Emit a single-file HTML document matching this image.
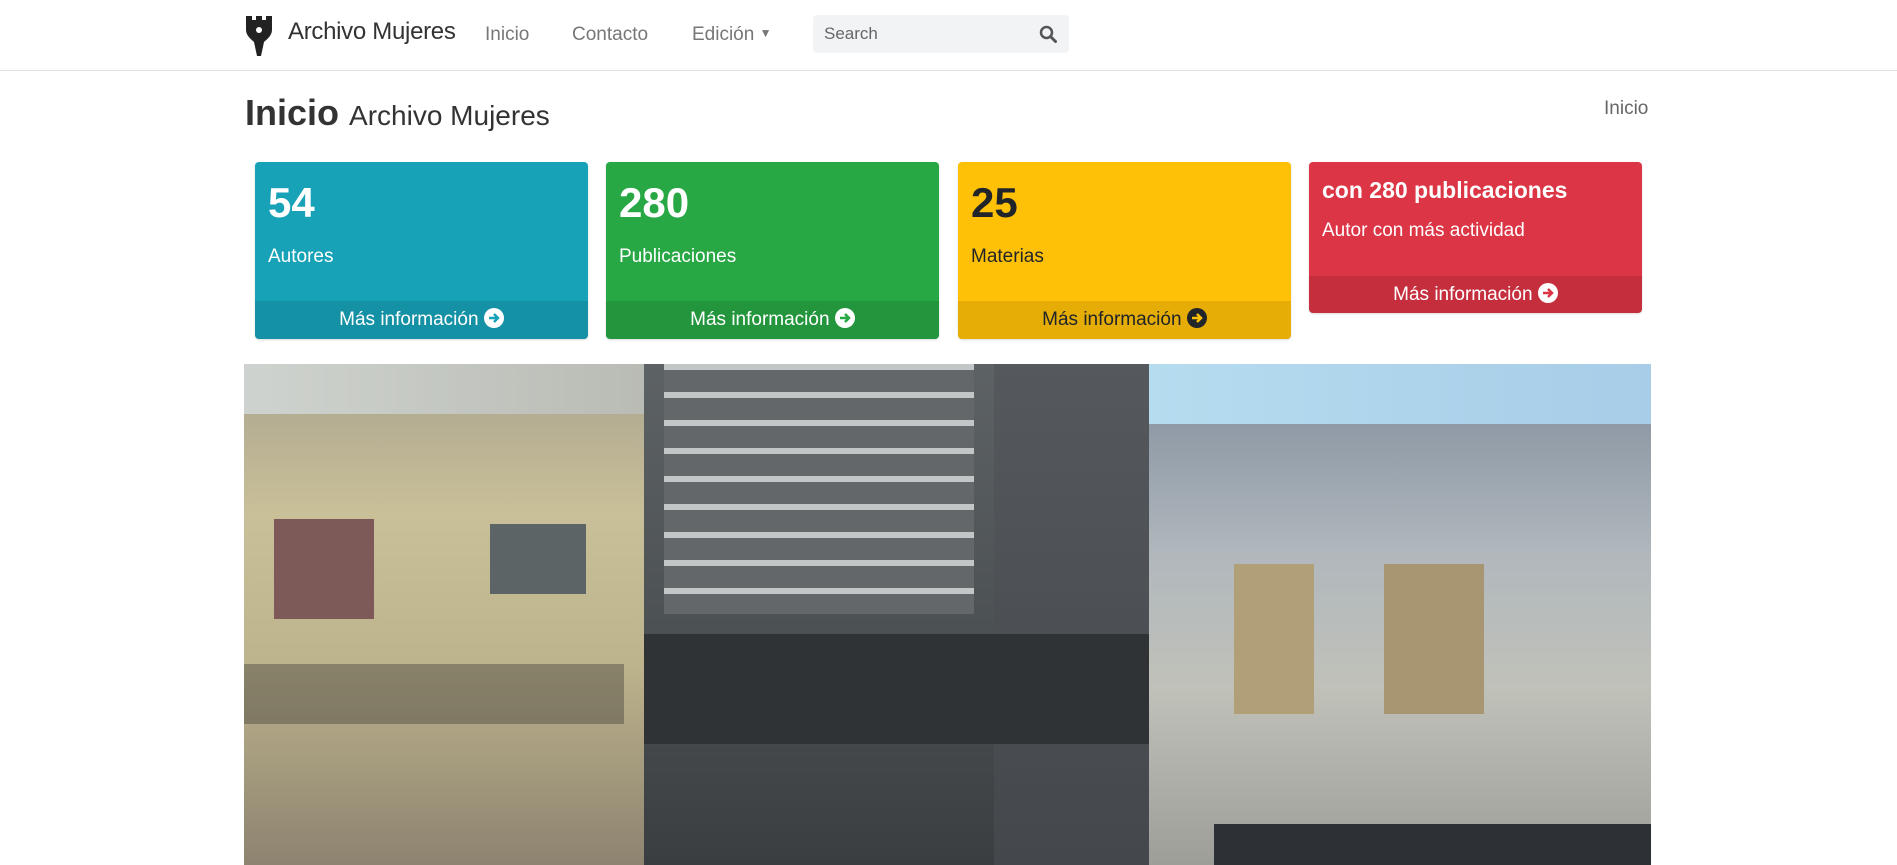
<!DOCTYPE html>
<html><head><meta charset="utf-8"><style>
*{box-sizing:border-box;margin:0;padding:0}
body{width:1897px;height:865px;overflow:hidden;background:#fff;font-family:"Liberation Sans",sans-serif;color:#212529;position:relative}
.nav{position:absolute;left:0;top:0;width:1897px;height:71px;border-bottom:1px solid #dee2e6}
.abs{position:absolute}
.brand{left:288px;top:18px;font-size:24px;color:#333;letter-spacing:-0.3px}
.nl{top:24px;font-size:19px;color:#777}
.search{left:813px;top:15px;width:256px;height:38px;background:#f1f3f5;border-radius:4px}
.card{position:absolute;top:162px;width:333px;height:177px;border-radius:4px;color:#fff;overflow:hidden;box-shadow:0 1px 2px rgba(0,0,0,.15)}
.card .n{position:absolute;left:13px;top:17px;font-size:42px;font-weight:bold}
.card .l{position:absolute;left:13px;top:84px;font-size:19px}
.card .f{position:absolute;left:0;bottom:0;width:100%;height:38px;text-align:center;font-size:19px;line-height:38px;background:rgba(0,0,0,.1)}
.ic{display:inline-block;width:20px;height:20px;border-radius:50%;background:currentColor;vertical-align:-3px;position:relative}
.ic svg{position:absolute;left:3px;top:3px}
</style></head><body>
<div class="nav">
<svg class="abs" style="left:244px;top:12px" width="30" height="44" viewBox="0 0 30 44"><path d="M2 4h6v4h4V4h6v4h4V4h6v14c0 6-6 10-8 12l-3 14h-4l-3-14C8 28 2 24 2 18z" fill="#222"/><circle cx="15" cy="18" r="3" fill="#fff"/></svg>
<div class="abs brand">Archivo Mujeres</div>
<div class="abs nl" style="left:485px">Inicio</div>
<div class="abs nl" style="left:572px">Contacto</div>
<div class="abs nl" style="left:692px">Edición <span style="font-size:12px;vertical-align:3px">▼</span></div>
<div class="abs search"><span class="abs" style="left:11px;top:9px;font-size:17px;color:#666">Search</span>
<svg class="abs" style="left:226px;top:10px" width="18" height="18" viewBox="0 0 18 18"><circle cx="7.5" cy="7.5" r="5.5" stroke="#555" stroke-width="2.5" fill="none"/><path d="M11.5 11.5l5 5" stroke="#555" stroke-width="3" stroke-linecap="round"/></svg></div>
</div>
<div class="abs" style="left:245px;top:92px;font-size:36px;color:#333"><b>Inicio</b> <span style="font-size:28px">Archivo Mujeres</span></div>
<div class="abs" style="left:1604px;top:98px;font-size:19px;color:#666">Inicio</div>

<div class="card" style="left:255px;background:#17a2b8"><div class="n">54</div><div class="l">Autores</div><div class="f">Más información <span class="ic" style="color:#fff"><svg width="14" height="14" viewBox="0 0 14 14"><path d="M2 7h9M7 3l4 4-4 4" stroke="#17a2b8" stroke-width="2.5" fill="none"/></svg></span></div></div>
<div class="card" style="left:606px;background:#28a745"><div class="n">280</div><div class="l">Publicaciones</div><div class="f">Más información <span class="ic" style="color:#fff"><svg width="14" height="14" viewBox="0 0 14 14"><path d="M2 7h9M7 3l4 4-4 4" stroke="#28a745" stroke-width="2.5" fill="none"/></svg></span></div></div>
<div class="card" style="left:958px;background:#ffc107;color:#212529"><div class="n">25</div><div class="l">Materias</div><div class="f">Más información <span class="ic" style="color:#212529"><svg width="14" height="14" viewBox="0 0 14 14"><path d="M2 7h9M7 3l4 4-4 4" stroke="#ffc107" stroke-width="2.5" fill="none"/></svg></span></div></div>
<div class="card" style="left:1309px;height:151px;background:#dc3545"><div class="n" style="font-size:23px;top:15px">con 280 publicaciones</div><div class="l" style="top:58px">Autor con más actividad</div><div class="f" style="height:37px;line-height:37px">Más información <span class="ic" style="color:#fff"><svg width="14" height="14" viewBox="0 0 14 14"><path d="M2 7h9M7 3l4 4-4 4" stroke="#dc3545" stroke-width="2.5" fill="none"/></svg></span></div></div>

<div class="abs" style="left:244px;top:364px;width:1407px;height:501px;overflow:hidden;background:#8a8f94">
<div class="abs" style="left:0;top:0;width:400px;height:501px;background:linear-gradient(#a9a48f,#c9bf98 30%,#bdb38c 60%,#8d8370)"></div>
<div class="abs" style="left:0;top:0;width:400px;height:50px;background:linear-gradient(90deg,#cfd3cf,#b9bcb4)"></div>
<div class="abs" style="left:30px;top:155px;width:100px;height:100px;background:#7d5a58"></div>
<div class="abs" style="left:246px;top:160px;width:96px;height:70px;background:#5c6466"></div>
<div class="abs" style="left:0;top:300px;width:380px;height:60px;background:rgba(40,40,40,.35)"></div>
<div class="abs" style="left:400px;top:0;width:350px;height:501px;background:linear-gradient(#5d6265,#4d5255 50%,#3a3e41)"></div>
<div class="abs" style="left:420px;top:0;width:310px;height:250px;background:repeating-linear-gradient(#c3c6c6 0 6px,#636769 6px 28px)"></div>
<div class="abs" style="left:750px;top:0;width:160px;height:501px;background:linear-gradient(#55595d,#44484c)"></div>
<div class="abs" style="left:400px;top:270px;width:570px;height:110px;background:#2f3335"></div>
<div class="abs" style="left:905px;top:0;width:502px;height:80px;background:linear-gradient(90deg,#b5dcef,#a7cde8)"></div>
<div class="abs" style="left:905px;top:60px;width:502px;height:441px;background:linear-gradient(#8f9aa6,#b1b8bd 30%,#c0c1b9 60%,#9d9e98)"></div>
<div class="abs" style="left:990px;top:200px;width:80px;height:150px;background:#b19f78"></div>
<div class="abs" style="left:1140px;top:200px;width:100px;height:150px;background:#a89672"></div>
<div class="abs" style="left:970px;top:460px;width:437px;height:41px;background:#2d3135"></div>
</div>
</body></html>
